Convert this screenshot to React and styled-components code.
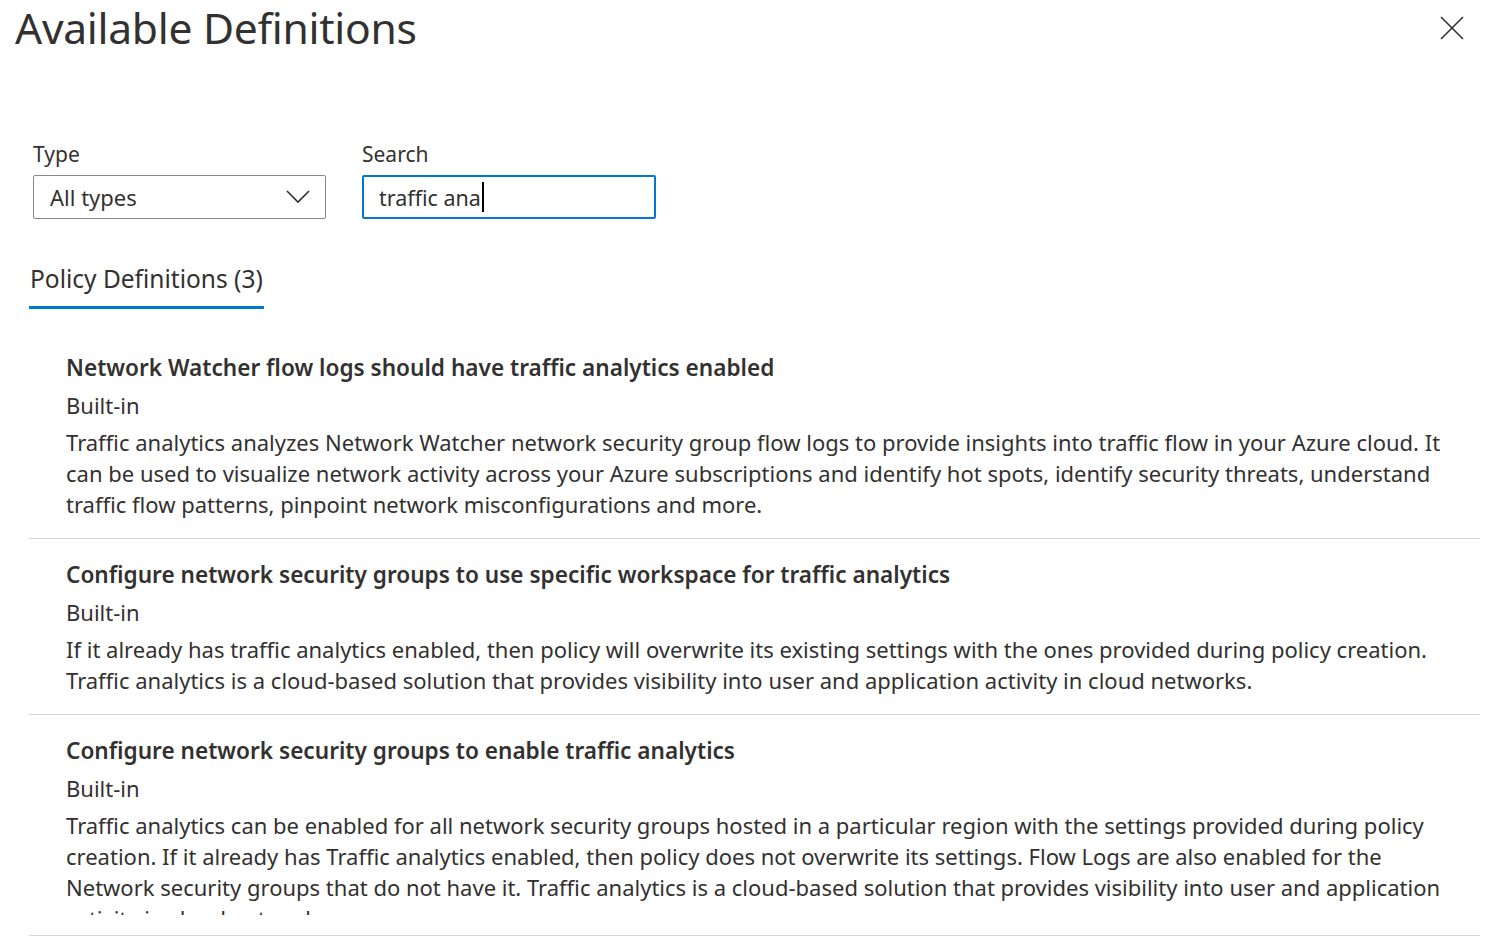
import React from 'react'
import styled, { createGlobalStyle } from 'styled-components'

const GlobalStyle = createGlobalStyle`
  html, body {
    margin: 0;
    padding: 0;
    background: #ffffff;
  }
  body {
    font-family: "Noto Sans", "Open Sans", sans-serif;
    color: #323130;
  }
`

const colors = {
  text: '#323130',
  border: '#8a8886',
  blue: '#0078d4',
  divider: '#d6d6d6',
}

const Page = styled.div`
  width: 1488px;
  height: 947px;
  overflow: hidden;
  box-sizing: border-box;
  padding: 0 8px 0 0;
`

const Header = styled.div`
  display: flex;
  justify-content: space-between;
  align-items: flex-start;
  height: 140px;
  padding-left: 15px;
`

const Title = styled.h1`
  margin: 0;
  font-size: 42.6px;
  font-weight: 400;
  line-height: 54px;
  letter-spacing: -0.3px;
  color: ${colors.text};
`

const CloseButton = styled.button`
  margin: 15px 15px 0 0;
  padding: 0;
  width: 26px;
  height: 26px;
  border: none;
  background: none;
  display: flex;
  align-items: center;
  justify-content: center;
  cursor: pointer;
`

const Filters = styled.div`
  display: flex;
  gap: 36px;
  padding-left: 33px;
`

const Field = styled.div`
  display: flex;
  flex-direction: column;
  width: ${props => props.width}px;
`

const FieldLabel = styled.label`
  font-size: 21px;
  line-height: 28px;
  height: 35px;
  color: ${colors.text};
`

const SelectBox = styled.div`
  box-sizing: border-box;
  height: 44px;
  border: 1px solid ${colors.border};
  border-radius: 2px;
  display: flex;
  align-items: center;
  justify-content: space-between;
  padding: 0 15px 0 16px;
  font-size: 22px;
`

const SearchBox = styled.div`
  box-sizing: border-box;
  height: 44px;
  border: 2px solid ${colors.blue};
  border-radius: 2px;
  display: flex;
  align-items: center;
  padding: 0 15px;
  font-size: 21.5px;
`

const Caret = styled.span`
  display: inline-block;
  width: 2px;
  height: 30px;
  margin-left: 1px;
  background: #000;
`

const Tabs = styled.div`
  display: flex;
  padding-left: 29px;
  margin-top: 44px;
`

const Tab = styled.div`
  font-size: 24.5px;
  line-height: 32px;
  padding: 0 1px 11px 1px;
  border-bottom: 3px solid ${colors.blue};
  color: ${colors.text};
`

const List = styled.div`
  margin-top: 38px;
  padding-left: 29px;
`

const Item = styled.div`
  border-bottom: 1px solid ${colors.divider};
  padding: ${props => (props.first ? '6px' : '21px')} 0
    ${props => props.bottom || 18}px 37px;
`

const ItemTitle = styled.div`
  font-size: 22.6px;
  font-weight: 600;
  line-height: 30px;
  color: ${colors.text};
`

const ItemType = styled.div`
  margin-top: 7px;
  font-size: 22px;
  line-height: 30px;
`

const Description = styled.div`
  margin-top: 7px;
  font-size: 22px;
  line-height: 31px;
  max-height: ${props => props.maxHeight || 'none'};
  overflow: hidden;
`

const items = [
  {
    title: 'Network Watcher flow logs should have traffic analytics enabled',
    lines: [
      'Traffic analytics analyzes Network Watcher network security group flow logs to provide insights into traffic flow in your Azure cloud. It',
      'can be used to visualize network activity across your Azure subscriptions and identify hot spots, identify security threats, understand',
      'traffic flow patterns, pinpoint network misconfigurations and more.',
    ],
  },
  {
    title: 'Configure network security groups to use specific workspace for traffic analytics',
    lines: [
      'If it already has traffic analytics enabled, then policy will overwrite its existing settings with the ones provided during policy creation.',
      'Traffic analytics is a cloud-based solution that provides visibility into user and application activity in cloud networks.',
    ],
  },
  {
    title: 'Configure network security groups to enable traffic analytics',
    lines: [
      'Traffic analytics can be enabled for all network security groups hosted in a particular region with the settings provided during policy',
      'creation. If it already has Traffic analytics enabled, then policy does not overwrite its settings. Flow Logs are also enabled for the',
      'Network security groups that do not have it. Traffic analytics is a cloud-based solution that provides visibility into user and application',
      'activity in cloud networks.',
    ],
    maxHeight: '105px',
    bottom: 20,
  },
]

const CloseIcon = () => (
  <svg width="24" height="24" viewBox="0 0 24 24" fill="none">
    <path d="M1 1L23 23M23 1L1 23" stroke="#323130" strokeWidth="1.6" />
  </svg>
)

const ChevronIcon = () => (
  <svg width="24" height="14" viewBox="0 0 24 14" fill="none">
    <path d="M1 1L12 12L23 1" stroke="#323130" strokeWidth="1.6" />
  </svg>
)

const App = () => (
  <Page>
    <GlobalStyle />
    <Header>
      <Title>Available Definitions</Title>
      <CloseButton aria-label="Close">
        <CloseIcon />
      </CloseButton>
    </Header>

    <Filters>
      <Field width={293}>
        <FieldLabel>Type</FieldLabel>
        <SelectBox>
          <span>All types</span>
          <ChevronIcon />
        </SelectBox>
      </Field>
      <Field width={294}>
        <FieldLabel>Search</FieldLabel>
        <SearchBox>
          <span>traffic ana</span>
          <Caret />
        </SearchBox>
      </Field>
    </Filters>

    <Tabs>
      <Tab>Policy Definitions (3)</Tab>
    </Tabs>

    <List>
      {items.map((item, i) => (
        <Item key={item.title} first={i === 0} bottom={item.bottom}>
          <ItemTitle>{item.title}</ItemTitle>
          <ItemType>Built-in</ItemType>
          <Description maxHeight={item.maxHeight}>
            {item.lines.map(line => (
              <div key={line}>{line}</div>
            ))}
          </Description>
        </Item>
      ))}
    </List>
  </Page>
)

export default App
